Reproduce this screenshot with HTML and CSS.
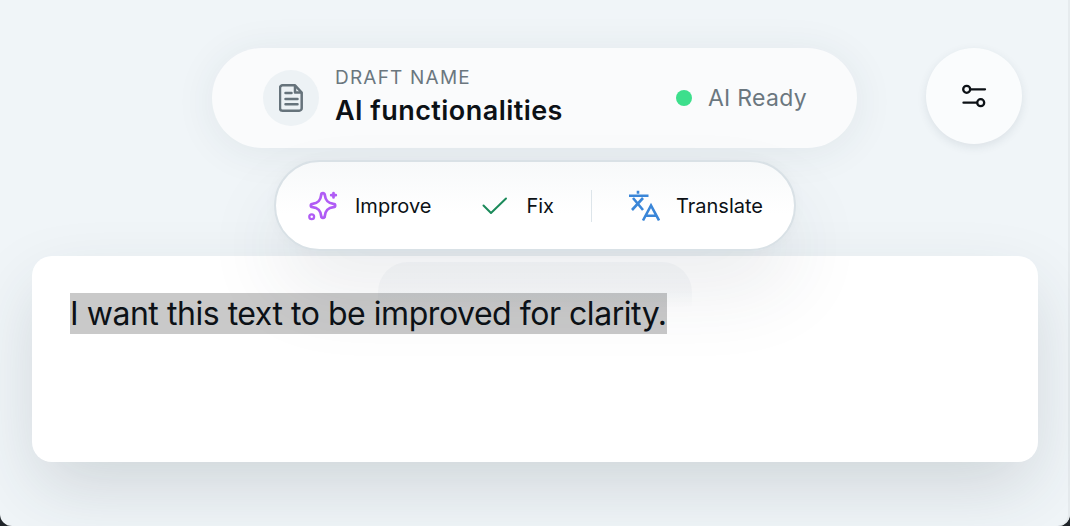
FILE: index.html
```html
<!DOCTYPE html>
<html lang="en">
<head>
<meta charset="utf-8">
<title>AI functionalities</title>
<link rel="stylesheet" href="styles.css">
</head>
<body>
<main class="app">
  <div class="top-row">
    <header class="draft-pill">
      <div class="draft-info">
        <span class="doc-badge">
          <svg class="doc-icon" viewBox="0 0 24 28" fill="none" stroke="#66737b" stroke-width="2.5" stroke-linejoin="round" stroke-linecap="round">
            <path d="M3.500 1.300h12.500l6.700 7.200v15.700a2.500 2.500 0 0 1-2.500 2.500h-16.700a2.500 2.500 0 0 1-2.500-2.500v-20.400a2.500 2.500 0 0 1 2.500-2.500z"/>
            <path d="M16 2v6.500h6"/>
            <path d="M6.500 9h6M6.500 15h12M6.500 20.300h12"/>
          </svg>
        </span>
        <div class="draft-text">
          <span class="draft-label">DRAFT NAME</span>
          <span class="draft-name">AI functionalities</span>
        </div>
      </div>
      <div class="status">
        <span class="status-dot"></span>
        <span class="status-text">AI Ready</span>
      </div>
    </header>
    <button class="settings-btn" aria-label="Settings">
      <svg viewBox="0 0 28 28" width="28" height="28" fill="none" stroke="#0c1116" stroke-width="2.300" stroke-linecap="round">
        <circle cx="6.700" cy="7.300" r="3.500"/>
        <path d="M10.500 7.300h14.500"/>
        <circle cx="20.700" cy="20.700" r="3.500"/>
        <path d="M3.500 20.700h13.500"/>
      </svg>
    </button>
  </div>
  <nav class="toolbar">
    <button class="tool tool-improve">
      <svg viewBox="0 0 32 32" width="32" height="32" fill="none" stroke="#b05cf5" stroke-width="2.700" stroke-linejoin="round" stroke-linecap="round">
        <path d="M14.200 5a1.800 1.800 0 0 1 3.600 0C18.500 10.500 20.500 13 26.500 13.800a1.700 1.700 0 0 1 0 3.400C20.500 18 18.500 20.500 17.800 26a1.800 1.800 0 0 1-3.600 0C13.500 20.500 11.500 18 5.500 17.200a1.700 1.700 0 0 1 0-3.400C11.500 13 13.500 10.500 14.200 5z"/>
        <path d="M26.500 3v4.500M24.200 5.200h4.600"/>
        <circle cx="4.700" cy="26.700" r="2.400" stroke-width="2.300"/>
      </svg>
      <span>Improve</span>
    </button>
    <button class="tool tool-fix">
      <svg viewBox="0 0 28 20" width="28" height="20" fill="none" stroke="#1b8a5a" stroke-width="2" stroke-linecap="round" stroke-linejoin="round">
        <path d="M2.500 9.500 10 17 25 2.500"/>
      </svg>
      <span>Fix</span>
    </button>
    <span class="divider"></span>
    <button class="tool tool-translate">
      <svg viewBox="0 0 32 32" width="32" height="32" fill="none" stroke="#3a86d8" stroke-width="2.600" stroke-linecap="butt" stroke-linejoin="miter">
        <path d="M1 5.700h19.500M10 .8v3"/>
        <path d="M5 8l10 12M15 8L4 20"/>
        <path d="M15 30.500l8-15 8 15M18 25.700h10"/>
      </svg>
      <span>Translate</span>
    </button>
  </nav>
  <section class="editor">
    <p class="editor-text"><span class="selected">I want this text to be improved for clarity.</span></p>
  </section>
</main>
</body>
</html>
```
FILE: styles.css
```css
* { box-sizing: border-box; }
html, body { margin: 0; height: 100%; background: #20252a; overflow: hidden; }
body { font-family: Inter, "Liberation Sans", sans-serif; color: #0c1116; }
.app {
  width: 1070px; height: 526px; background: #f0f5f8;
  border-radius: 0 0 12px 12px;
  box-shadow: inset -2px 0 0 #e6ebee;
  display: flex; flex-direction: column; align-items: center;
  padding-top: 48px; overflow: hidden; position: relative;
}
.top-row { width: 1070px; height: 100px; position: relative; display: flex; padding-left: 212px; gap: 69px; align-items: flex-start; }
.draft-pill {
  width: 645px; height: 100px; border-radius: 50px; background: #fafbfc;
  display: flex; align-items: center; justify-content: space-between;
  padding: 0 50px 0 51px;
  box-shadow: 0 4px 40px rgba(40, 60, 75, 0.08);
}
.draft-info { display: flex; align-items: center; gap: 16px; }
.doc-badge { width: 56px; height: 56px; border-radius: 50%; background: #edf2f5; display: flex; align-items: center; justify-content: center; }
.doc-icon { width: 24px; height: 28px; }
.draft-text { display: flex; flex-direction: column; }
.draft-label { font-size: 19px; line-height: 22px; letter-spacing: 1.2px; color: #6b777f; margin-bottom: 5px; margin-top: -1px; }
.draft-name { font-size: 27px; line-height: 34px; font-weight: 600; letter-spacing: 0.45px; color: #0c1116; }
.status { display: flex; align-items: center; gap: 16px; }
.status-dot { width: 16px; height: 16px; border-radius: 50%; background: #3ddf8c; }
.status-text { font-size: 23px; letter-spacing: 0.3px; color: #6b777f; }
.settings-btn {
  width: 96px; height: 96px; border: 0; border-radius: 50%; background: #fafcfd;
  display: flex; align-items: center; justify-content: center; padding: 0;
  box-shadow: 0 3px 10px rgba(40, 60, 75, 0.1);
}
.toolbar {
  margin-top: 12px; height: 91px; width: 522px; border-radius: 46px;
  border: 2px solid #d9e1e6; background: linear-gradient(#f7f9fa, #fff 60%);
  display: flex; align-items: center; padding: 0 31px;
  position: relative; z-index: 2;
  box-shadow: 0 40px 80px rgba(40, 60, 75, 0.09), 0 0 14px rgba(40, 60, 75, 0.03);
}
.toolbar::after {
  content: ""; position: absolute; left: 102px; right: 102px; top: 100px; height: 46px;
  border-radius: 30px 30px 0 0; pointer-events: none;
  background: linear-gradient(rgba(60, 90, 120, 0.04) 60%, rgba(60, 90, 120, 0));
}
.tool { border: 0; background: none; display: flex; align-items: center; gap: 16px; padding: 0; font: inherit; font-size: 20px; color: #0c1116; }
.tool-fix { margin-left: 50px; gap: 17px; }
.divider { width: 2px; height: 32px; background: #dde5ea; margin: 0 36px 0 37px; }
.editor {
  margin-top: 5px; width: 1006px; height: 206px; border-radius: 20px; background: #fff;
  padding: 37px 38px; box-shadow: 0 28px 70px -6px rgba(40, 55, 65, 0.17);
}
.editor-text { margin: 0; font-size: 32px; line-height: 41px; letter-spacing: -0.46px; }
.selected { background: #c9c9c9; display: inline-block; }
```
